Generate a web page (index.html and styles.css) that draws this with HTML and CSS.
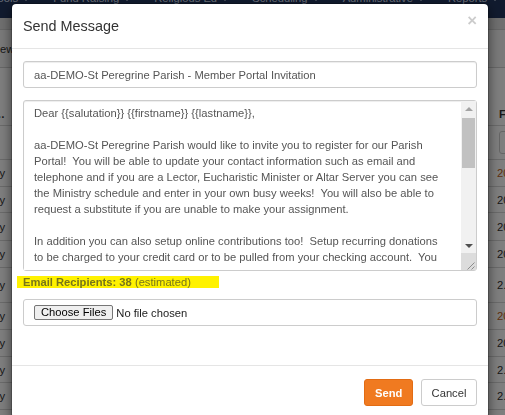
FILE: index.html
```html
<!DOCTYPE html>
<html lang="en">
<head>
<meta charset="utf-8">
<title>Send Message</title>
<link rel="stylesheet" href="styles.css">
</head>
<body>
<div class="page">
  <nav class="topnav">
    <span class="nav-item">Tools <i class="caret"></i></span>
    <span class="nav-item">Fund Raising <i class="caret"></i></span>
    <span class="nav-item">Religious Ed <i class="caret"></i></span>
    <span class="nav-item">Scheduling <i class="caret"></i></span>
    <span class="nav-item">Administrative <i class="caret"></i></span>
    <span class="nav-item">Reports <i class="caret"></i></span>
  </nav>
  <div class="subbar"></div>
  <div class="toolbar"><span class="tool-link">New</span></div>
  <div class="grid">
    <div class="grid-row head h58"><span class="c1">Event…</span><span></span><span class="c3">From</span></div>
    <div class="grid-row h34"><span></span><span></span><span class="c3"><span class="filter-box"></span></span></div>
    <div class="grid-row h27"><span class="c1">Sunday</span><span></span><span class="c3 hot">2023-01-08</span></div>
    <div class="grid-row h26"><span class="c1">Sunday</span><span></span><span class="c3">2023-01-15</span></div>
    <div class="grid-row h28"><span class="c1">Sunday</span><span></span><span class="c3">2023-01-22</span></div>
    <div class="grid-row h27"><span class="c1">Sunday</span><span></span><span class="c3">2023-01-29</span></div>
    <div class="grid-row h35"><span class="c1">Saturday</span><span></span><span class="c3">2.5.2023</span></div>
    <div class="grid-row h27"><span class="c1">Sunday</span><span></span><span class="c3 hot">2023-02-12</span></div>
    <div class="grid-row h27"><span class="c1">Sunday</span><span></span><span class="c3">2023-02-19</span></div>
    <div class="grid-row h26"><span class="c1">Sunday</span><span></span><span class="c3">2.26.2023</span></div>
    <div class="grid-row h27"><span class="c1">Sunday</span><span></span><span class="c3">2.5.2023</span></div>
    <div class="grid-row h27"><span class="c1">Sunday</span><span></span><span class="c3">2023-03-12</span></div>
  </div>
</div>

<div class="backdrop"></div>

<div class="modal" role="dialog" aria-labelledby="modal-title">
  <div class="modal-header">
    <h4 class="modal-title" id="modal-title">Send Message</h4>
    <button class="close" type="button" aria-label="Close">×</button>
  </div>
  <div class="modal-body">
    <input class="subject" type="text" value="aa-DEMO-St Peregrine Parish - Member Portal Invitation">
    <div class="message-wrap">
      <textarea class="message">Dear {{salutation}} {{firstname}} {{lastname}},

aa-DEMO-St Peregrine Parish would like to invite you to register for our Parish Portal!  You will be able to update your contact information such as email and telephone and if you are a Lector, Eucharistic Minister or Altar Server you can see the Ministry schedule and enter in your own busy weeks!  You will also be able to request a substitute if you are unable to make your assignment.

In addition you can also setup online contributions too!  Setup recurring donations to be charged to your credit card or to be pulled from your checking account.  You can also view your contribution history and print your year end giving statement at any time.

To register, simply click on the link below and follow the instructions.  You will be asked to create a username and password.  Once your registration is approved you will receive an email confirming your access.

{{registrationlink}}

If you have any questions please contact the parish office.

Thank you and God bless,

aa-DEMO-St Peregrine Parish</textarea>
      <div class="vscroll" aria-hidden="true">
        <span class="sb-btn"><i class="arrow-up"></i></span>
        <span class="sb-track"><span class="sb-thumb"></span></span>
        <span class="sb-btn"><i class="arrow-down"></i></span>
        <span class="sb-corner">
          <svg width="15" height="17" viewBox="0 0 15 17"><path d="M13.5 9.5 L6.5 16.5 M13.5 13.5 L10.5 16.5" stroke="#8c8c8c" stroke-width="1" fill="none"/></svg>
        </span>
      </div>
    </div>
    <div class="recipients"><span class="hl"><b>Email Recipients: 38</b> (estimated)</span></div>
    <div class="file-box">
      <button class="file-btn" type="button">Choose Files</button>
      <span class="file-name">No file chosen</span>
    </div>
  </div>
  <div class="modal-footer">
    <button class="btn btn-send" type="button">Send</button>
    <button class="btn btn-cancel" type="button">Cancel</button>
  </div>
</div>
</body>
</html>
```

FILE: styles.css
```css
html, body {
  margin: 0;
  height: 100%;
  overflow: hidden;
}

body {
  font-family: "Liberation Sans", Arial, sans-serif;
  font-size: 11.2px;
  color: #333;
  background: #f4f4f4;
}

/* ---------- underlying page ---------- */
.topnav {
  height: 18px;
  background: #22365e;
  display: flex;
  gap: 24px;
  overflow: hidden;
  white-space: nowrap;
  color: #d4def0;
}

.nav-item {
  margin-top: -9px;
  line-height: 14px;
}

.nav-item:first-child {
  margin-left: -8px;
}

.caret {
  display: inline-block;
  width: 0;
  height: 0;
  margin-left: 2px;
  vertical-align: middle;
  border-top: 3px solid;
  border-left: 3px solid transparent;
  border-right: 3px solid transparent;
}

.subbar {
  height: 11px;
  background: #e0e0e0;
  border-bottom: 1px solid #cfcfcf;
}

.toolbar {
  height: 38px;
  box-sizing: border-box;
  display: flex;
  align-items: center;
  border-bottom: 1px solid #d0d0d0;
}

.tool-link {
  margin-left: -8px;
  color: #333;
}

.grid {
  margin: 0 -60px 0 -44px;
}

.grid-row {
  display: grid;
  grid-template-columns: 55px 1fr 76px;
  align-items: center;
  box-sizing: border-box;
  border-bottom: 1px solid #d6d6d6;
  background: #fff;
  white-space: nowrap;
}

.grid-row.head {
  align-items: end;
  padding-bottom: 5px;
  font-weight: bold;
}

.h58 { height: 58px; }
.h35 { height: 35px; }
.h34 { height: 34px; }
.h28 { height: 28px; }
.h27 { height: 27px; }
.h26 { height: 26px; }

.c1 {
  text-align: right;
  padding-right: 6px;
}

.c3 {
  padding-left: 8px;
  overflow: hidden;
}

.head .c3 {
  padding-left: 10px;
}

.hot {
  color: #c0641c;
}

.filter-box {
  display: block;
  height: 23px;
  margin-left: 2px;
  box-sizing: border-box;
  border: 1px solid #ccc;
  border-radius: 3px;
  background: #fff;
}

/* ---------- modal ---------- */
.backdrop {
  position: fixed;
  inset: 0;
  background: rgba(0, 0, 0, 0.5);
}

.modal {
  position: absolute;
  top: 3px;
  left: 11px;
  width: 478px;
  box-sizing: border-box;
  background: #fff;
  background-clip: padding-box;
  border: 1px solid rgba(0, 0, 0, 0.2);
  border-radius: 5px;
  box-shadow: 0 4px 12px rgba(0, 0, 0, 0.5);
}

.modal-header {
  display: flex;
  justify-content: space-between;
  align-items: flex-start;
  padding: 12px 11px 11px;
  border-bottom: 1px solid #e5e5e5;
}

.modal-title {
  margin: 0;
  font-size: 14.4px;
  font-weight: normal;
  line-height: 21px;
  color: #333;
}

.close {
  margin: -3px 0 0;
  padding: 0;
  border: 0;
  background: none;
  font: bold 16.8px/1 "Liberation Sans", Arial, sans-serif;
  color: #000;
  opacity: 0.2;
  cursor: pointer;
}

.modal-body {
  padding: 12px 11px;
}

.subject {
  display: block;
  width: 100%;
  height: 27px;
  margin: 0 0 12px;
  box-sizing: border-box;
  padding: 0 10px;
  border: 1px solid #ccc;
  border-radius: 3px;
  box-shadow: inset 0 1px 1px rgba(0, 0, 0, 0.075);
  font: 11.2px "Liberation Sans", Arial, sans-serif;
  color: #555;
}

.message-wrap {
  position: relative;
}

/* bottom padding strip of the textarea, covering the next scrolled line */
.message-wrap::after {
  content: "";
  position: absolute;
  left: 1px;
  right: 16px;
  bottom: 1px;
  height: 4px;
  background: #fff;
}

.message {
  display: block;
  width: 100%;
  height: 171px;
  margin: 0;
  box-sizing: border-box;
  padding: 4px 29px 4px 10px;
  border: 1px solid #ccc;
  border-radius: 3px;
  box-shadow: inset 0 1px 1px rgba(0, 0, 0, 0.075);
  font: 11.2px/16px "Liberation Sans", Arial, sans-serif;
  color: #555;
  resize: none;
  overflow: hidden;
}

/* drawn scrollbar of the textarea */
.vscroll {
  position: absolute;
  top: 1px;
  right: 1px;
  bottom: 1px;
  width: 15px;
  display: flex;
  flex-direction: column;
  background: #f1f1f1;
}

.sb-btn {
  height: 15px;
  flex: none;
  display: flex;
  align-items: center;
  justify-content: center;
}

.arrow-up,
.arrow-down {
  width: 0;
  height: 0;
  border-left: 4px solid transparent;
  border-right: 4px solid transparent;
}

.arrow-up {
  border-bottom: 4px solid #a3a3a3;
}

.arrow-down {
  border-top: 4px solid #505050;
}

.sb-track {
  flex: 1;
  padding-top: 2px;
}

.sb-thumb {
  display: block;
  height: 50px;
  margin: 0 1px;
  background: #c1c1c1;
}

.sb-corner {
  height: 17px;
  flex: none;
  background: #dcdcdc;
}

.sb-corner svg {
  display: block;
}

.recipients {
  margin: 5px 0 11px;
  line-height: 12px;
}

.hl {
  display: inline-block;
  margin-left: -6px;
  padding: 0 28px 0 6px;
  background: #fff200;
  color: #77751a;
}

.file-box {
  display: flex;
  align-items: center;
  height: 27px;
  margin-bottom: 27px;
  box-sizing: border-box;
  padding: 0 10px;
  border: 1px solid #ccc;
  border-radius: 3px;
}

.file-btn {
  margin: 0 3px 0 0;
  padding: 1px 6px;
  border: 1px solid #767676;
  border-radius: 2px;
  background: #efefef;
  font: 11.2px/11px "Liberation Sans", Arial, sans-serif;
  color: #000;
}

.file-name {
  color: #222;
}

.modal-footer {
  display: flex;
  justify-content: flex-end;
  gap: 8px;
  padding: 13px 11px 12px;
  border-top: 1px solid #e5e5e5;
}

.btn {
  height: 27px;
  box-sizing: border-box;
  padding: 0 9.6px;
  border: 1px solid;
  border-radius: 3px;
  font: 11.2px "Liberation Sans", Arial, sans-serif;
  cursor: pointer;
}

.btn-send {
  background: #f07a20;
  border-color: #e26c14;
  color: #fff;
  font-weight: bold;
}

.btn-cancel {
  background: #fff;
  border-color: #ccc;
  color: #333;
}
```
